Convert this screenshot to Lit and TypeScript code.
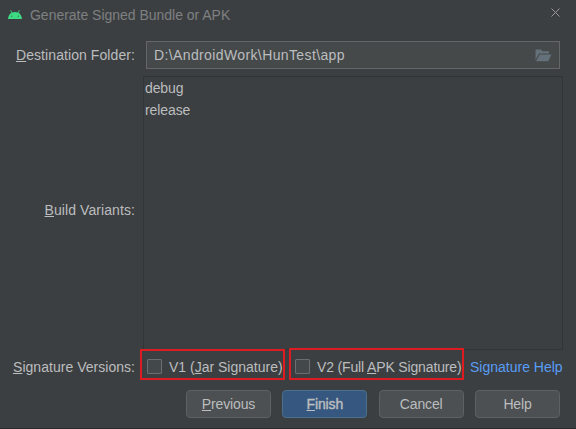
import { LitElement, html, css } from "lit";
import { customElement } from "lit/decorators.js";

@customElement("app-root")
export class AppRoot extends LitElement {
  static styles = css`
    :host {
      display: flex;
      flex-direction: column;
      box-sizing: border-box;
      width: 576px;
      height: 429px;
      overflow: hidden;
      background: #3c3f41;
      border-bottom: 1px solid #292b2d;
      color: #bbbdbf;
      font: 14px/20px "Liberation Sans", Arial, sans-serif;
      letter-spacing: 0.08px;
      white-space: nowrap;
    }
    * { box-sizing: border-box; }
    svg { display: block; flex: none; }
    u { text-decoration: underline; text-decoration-thickness: 1px; text-underline-offset: 1px; text-decoration-skip-ink: none; }
    header { display: flex; height: 41px; padding: 0 15px 0 8px; }
    .android { margin-top: 10px; }
    .title { margin: 5px auto 0 8px; color: #7e8082; letter-spacing: -0.02px; }
    .close { margin-top: 7px; }
    .row { display: flex; flex: none; }
    .label { width: 135px; text-align: right; flex: none; }
    .path { height: 35px; }
    .path .label { padding-top: 4px; }
    .input { display: flex; align-items: center; justify-content: space-between; width: 414px; height: 28px; margin-left: 11px; padding: 0 7px; border: 1px solid #646667; background: #45494a; }
    .pathtext { letter-spacing: 0.38px; }
    .variants { height: 273px; }
    .variants .label { padding-top: 124px; }
    .list { width: 420px; height: 274px; margin-left: 8px; border: 1px solid #323435; padding: 0 0 0 1px; letter-spacing: -0.1px; }
    .item { height: 22px; line-height: 22px; }
    .versions { height: 41px; }
    .versions .label { padding-top: 8px; letter-spacing: 0.03px; }
    .mark { display: flex; flex: none; border: 2px solid #df1b22; }
    .v1 { width: 145px; height: 31px; margin: 0 4px 0 5px; padding: 6px 0 0 5px; letter-spacing: 0; }
    .v2 { width: 175px; height: 32px; margin-top: -1px; padding: 7px 0 0 4px; letter-spacing: -0.15px; }
    .box { width: 15px; height: 15px; margin: 2px 7px 0 0; border: 1px solid #6b6d6e; background: #43494a; border-radius: 1px; flex: none; }
    .link { color: #589df6; margin: 8px 0 0 6px; letter-spacing: 0; }
    .actions { display: flex; justify-content: space-between; width: 374px; margin-left: 186px; }
    button { width: 85px; height: 28px; padding: 0 0 1px; font: inherit; letter-spacing: -0.15px; color: inherit; border: 1px solid #5e6061; border-radius: 4px; background: #4c5052; }
    .primary { background: #365880; border-color: #4c708c; -webkit-text-stroke: 0.4px currentColor; }
  `;

  render() {
    return html`
      <header>
        <svg class="android" width="14" height="9" viewBox="0 0 14 9">
          <path d="M0 9C.2 6.1 1.5 4 3.6 2.8L2.2.5 2.8.1 4.3 2.5Q7 1.5 9.7 2.5L11.2.1 11.8.5 10.4 2.8C12.5 4 13.8 6.1 14 9Z" fill="#3ddc84" />
          <circle cx="3.8" cy="6.2" r=".6" fill="#315b47" /><circle cx="10.2" cy="6.2" r=".6" fill="#315b47" />
        </svg>
        <span class="title">Generate Signed Bundle or APK</span>
        <svg class="close" width="11" height="11" viewBox="0 0 11 11"><path d="M1.5 1.5 9.5 9.5M9.5 1.5 1.5 9.5" stroke="#969899" /></svg>
      </header>
      <div class="row path">
        <span class="label"><u>D</u>estination Folder:</span>
        <div class="input">
          <span class="pathtext">D:\\AndroidWork\\HunTest\\app</span>
          <svg width="17" height="13" viewBox="0 0 17 13" fill="#65717a"><path d="M.5 11V.5H6L7.5 2.3H14V4.5H4Z" /><path d="M4.7 5.5H16.5L13.2 12.2H1Z" /></svg>
        </div>
      </div>
      <div class="row variants">
        <span class="label"><u>B</u>uild Variants:</span>
        <div class="list"><div class="item"><span>debug</span></div><div class="item"><span>release</span></div></div>
      </div>
      <div class="row versions">
        <span class="label"><u>S</u>ignature Versions:</span>
        <div class="mark v1"><i class="box"></i><span>V1 (<u>J</u>ar Signature)</span></div>
        <div class="mark v2"><i class="box"></i><span>V2 (Full <u>A</u>PK Signature)</span></div>
        <span class="link">Signature Help</span>
      </div>
      <div class="actions">
        <button><u>P</u>revious</button>
        <button class="primary"><u>F</u>inish</button>
        <button>Cancel</button>
        <button>Help</button>
      </div>
    `;
  }
}
